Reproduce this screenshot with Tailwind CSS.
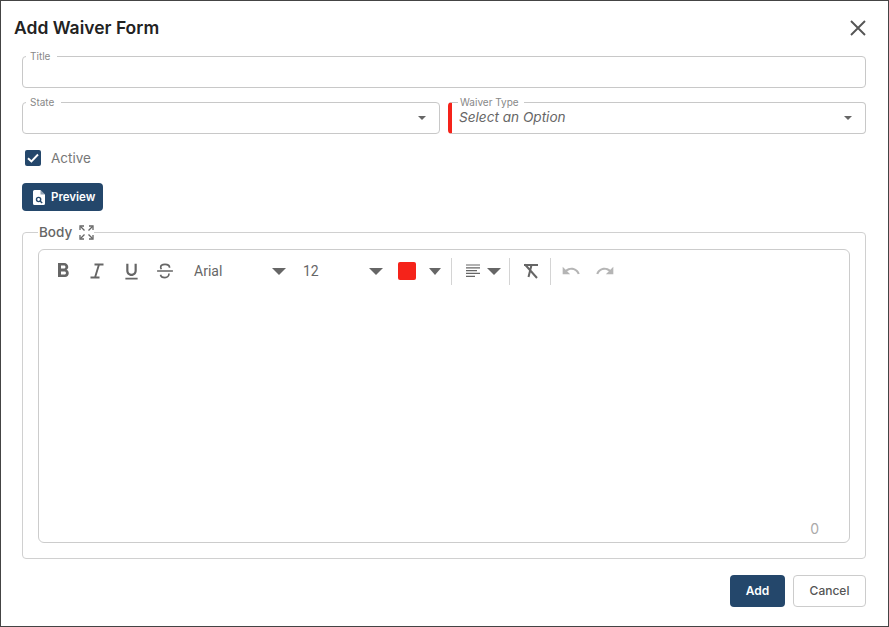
<!DOCTYPE html>
<html lang="en">
<head>
<meta charset="UTF-8">
<title>Add Waiver Form</title>
<script src="https://cdn.jsdelivr.net/npm/@tailwindcss/browser@4"></script>
</head>
<body class="bg-white font-['Inter',sans-serif]">
<div class="w-[889px] h-[627px] border border-[#444] bg-white flex flex-col overflow-hidden">

  <!-- Header -->
  <div class="h-[49px] pl-[13px] pr-[22px] flex items-center justify-between shrink-0 pt-[5px]">
    <h1 class="text-[17.5px] font-semibold text-[#222] leading-none">Add Waiver Form</h1>
    <svg class="w-[22px] h-[22px] text-[#555] -mr-[3px]" viewBox="0 0 22 22" fill="none" stroke="currentColor" stroke-width="1.9"><path d="M4 4 18 18M18 4 4 18"/></svg>
  </div>

  <div class="pl-[21px] pr-[22px] flex flex-col flex-1">
    <!-- Title -->
    <fieldset class="h-[38px] border border-[#c8c8c8] rounded-[4px] pl-[3px] block">
      <legend class="pl-[4px] pr-[7px] text-[10px] leading-[12px] text-[#888]">Title</legend>
    </fieldset>

    <!-- State / Waiver Type -->
    <div class="grid grid-cols-2 gap-[8px] mt-[8px]">
      <fieldset class="h-[38px] border border-[#c8c8c8] rounded-[4px] pl-[3px] pr-[13px]">
        <legend class="pl-[4px] pr-[7px] text-[10px] leading-[12px] text-[#888]">State</legend>
        <div class="flex justify-end items-center h-[20px]">
          <span class="w-0 h-0 border-x-[4px] border-x-transparent border-t-[4px] border-t-[#666]"></span>
        </div>
      </fieldset>
      <fieldset class="h-[38px] border border-[#c8c8c8] border-l-[4px] border-l-[#f5231a] rounded-[4px] pl-[7px] pr-[13px]">
        <legend class="pl-[2px] pr-[5px] -ml-[1px] text-[10px] leading-[12px] text-[#888]">Waiver Type</legend>
        <div class="flex justify-between items-center h-[19px]">
          <span class="text-[13.6px] italic text-[#666] leading-none">Select an Option</span>
          <span class="w-0 h-0 border-x-[4px] border-x-transparent border-t-[4px] border-t-[#666]"></span>
        </div>
      </fieldset>
    </div>

    <!-- Active -->
    <label class="flex items-center mt-[16px] ml-[3px] h-[16px]">
      <span class="w-[16px] h-[16px] rounded-[2px] bg-[#24476b] flex items-center justify-center">
        <svg class="w-[14px] h-[14px]" viewBox="0 0 14 14" fill="none" stroke="white" stroke-width="1.9"><path d="M2 7.200 5.400 10.500 12 3.500"/></svg>
      </span>
      <span class="ml-[10px] text-[13.5px] text-[#777]">Active</span>
    </label>

    <!-- Preview -->
    <button class="mt-[17px] w-[81px] h-[28px] rounded-[4px] bg-[#24476b] text-white text-[11.500px] font-semibold flex items-center pl-[10px]">
      <svg class="w-[14px] h-[17px] mr-[5px]" viewBox="0 0 14 17"><path fill="white" d="M2.500 1h6L13 5.500V14.500A1.500 1.500 0 0 1 11.500 16h-9A1.500 1.500 0 0 1 1 14.500V2.500A1.500 1.500 0 0 1 2.500 1z"/><path fill="#24476b" d="M8.500 1v4.500H13z" opacity=".5"/><circle cx="6.600" cy="10.500" r="2.100" fill="none" stroke="#24476b" stroke-width="1.400"/><path d="M8 12 10.200 14" stroke="#24476b" stroke-width="1.500"/></svg>
      <span class="pt-[1px]">Preview</span>
    </button>

    <!-- Body -->
    <fieldset class="mt-[14px] h-[334px] border border-[#d0d0d0] rounded-[4px] px-[15px] pb-[15px] flex flex-col">
      <legend class="ml-[0px] pl-[1px] pr-0 h-[14px] flex items-center text-[13.5px] leading-[14px] font-medium text-[#666]">
        Body
        <svg class="w-[15px] h-[15px] ml-[7px]" viewBox="0 0 15 15" fill="none" stroke="#666" stroke-width="1.300"><path d="M1 5V1h4M14 5V1h-4M1 10v4h4M14 10v4h-4"/><path d="M1.500 1.500 5.500 5.500M13.500 1.500 9.500 5.500M1.500 13.500 5.500 9.500M13.500 13.500 9.500 9.500"/></svg>
      </legend>

      <div class="mt-[10px] h-[294px] border border-[#ccc] rounded-[6px] flex flex-col">
        <!-- Toolbar -->
        <div class="h-[42px] flex items-center pl-[7px] text-[#666] shrink-0">
          <span class="w-[34px] flex justify-center"><svg class="w-[24px] h-[24px]" viewBox="0 0 24 24" fill="currentColor"><path d="M15.600 10.790c.97-.67 1.650-1.770 1.650-2.790 0-2.260-1.750-4-4-4H7v14h7.040c2.090 0 3.710-1.700 3.710-3.790 0-1.520-.86-2.820-2.150-3.420zM10 6.500h3c.83 0 1.500.67 1.500 1.500s-.67 1.500-1.500 1.500h-3v-3zm3.500 9H10v-3h3.500c.83 0 1.500.67 1.500 1.500s-.67 1.500-1.500 1.500z"/></svg></span>
          <span class="w-[34px] flex justify-center"><svg class="w-[20px] h-[20px]" viewBox="0 0 20 20" fill="none" stroke="currentColor" stroke-width="1.900"><path d="M7.500 3.500h9M3.500 16.500h9M12 3.500 8 16.500"/></svg></span>
          <span class="w-[34px] flex justify-center"><svg class="w-[21px] h-[21px]" viewBox="0 0 24 24" fill="currentColor"><path d="M12 17c3.310 0 6-2.690 6-6V3h-2.500v8c0 1.930-1.570 3.500-3.500 3.500S8.500 12.930 8.500 11V3H6v8c0 3.310 2.690 6 6 6zm-7 2v2h14v-2H5z"/></svg></span>
          <span class="w-[34px] flex justify-center"><svg class="w-[20px] h-[20px]" viewBox="0 0 24 24" fill="none" stroke="currentColor" stroke-width="2"><path d="M17.500 8c0-2.500-2.500-4-5.500-4S6.800 5.300 6.800 7.500c0 1 .4 1.700 1 2.300M2.500 12h19M16.800 15c0 3-2.200 5-4.800 5s-5-1.500-5.400-3.500"/></svg></span>
          <span class="ml-[4px] w-[109px] pl-[8px] pr-[9px] flex items-center justify-between">
            <span class="text-[14px] font-['Roboto',sans-serif] text-[#666]">Arial</span>
            <span class="w-0 h-0 border-x-[7px] border-x-transparent border-t-[7px] border-t-[#666]"></span>
          </span>
          <span class="w-[96px] pl-[8px] pr-[8px] flex items-center justify-between">
            <span class="text-[14px] font-['Roboto',sans-serif] text-[#666]">12</span>
            <span class="w-0 h-0 border-x-[7px] border-x-transparent border-t-[7px] border-t-[#666]"></span>
          </span>
          <span class="ml-[7px] w-[18px] h-[18px] rounded-[2px] bg-[#f5231a]"></span>
          <span class="ml-[13px] w-0 h-0 border-x-[6px] border-x-transparent border-t-[7px] border-t-[#666]"></span>
          <span class="ml-[10px] w-px h-[27px] bg-[#d4d4d4]"></span>
          <svg class="ml-[13px] w-[16px] h-[14px]" viewBox="0 0 16 14" stroke="#666" stroke-width="1.200"><path d="M1 1h14M1 3.800h14M1 6.600h11M1 9.400h14M1 12.400h9"/></svg>
          <span class="ml-[6px] w-0 h-0 border-x-[7px] border-x-transparent border-t-[7px] border-t-[#666]"></span>
          <span class="ml-[8px] w-px h-[27px] bg-[#d4d4d4]"></span>
          <svg class="ml-[11px] w-[20px] h-[20px]" viewBox="0 0 20 20" fill="none" stroke="#666" stroke-width="2"><path d="M3 4h14M10.500 4 7.500 16M4 3.500 16 17"/></svg>
          <span class="ml-[9px] w-px h-[27px] bg-[#d4d4d4]"></span>
          <svg class="ml-[10px] w-[20px] h-[20px]" viewBox="0 0 24 24" fill="#b5b5b5"><path d="M12.500 8c-2.650 0-5.050.99-6.900 2.600L2 7v9h9l-3.620-3.620c1.390-1.160 3.160-1.880 5.120-1.880 3.540 0 6.550 2.310 7.600 5.500l2.370-.78C21.080 11.030 17.150 8 12.500 8z"/></svg>
          <svg class="ml-[14px] w-[20px] h-[20px]" viewBox="0 0 24 24" fill="#b5b5b5"><path d="M18.400 10.600C16.550 8.990 14.150 8 11.500 8c-4.650 0-8.580 3.030-9.960 7.220L3.900 16c1.050-3.190 4.050-5.500 7.600-5.500 1.950 0 3.730.72 5.120 1.880L13 16h9V7l-3.600 3.600z"/></svg>
        </div>
        <div class="flex-1"></div>
        <div class="pr-[30px] pb-[5px] text-right text-[14px] text-[#aaa] leading-[16px]">0</div>
      </div>
    </fieldset>

    <!-- Footer -->
    <div class="flex justify-end gap-[8px] mt-[16px]">
      <button class="w-[55px] h-[32px] rounded-[4px] bg-[#24476b] text-white text-[12px] font-semibold">Add</button>
      <button class="w-[73px] h-[32px] rounded-[4px] border border-[#ccc] bg-white text-[#555] text-[12px] font-medium">Cancel</button>
    </div>
  </div>
</div>
</body>
</html>
